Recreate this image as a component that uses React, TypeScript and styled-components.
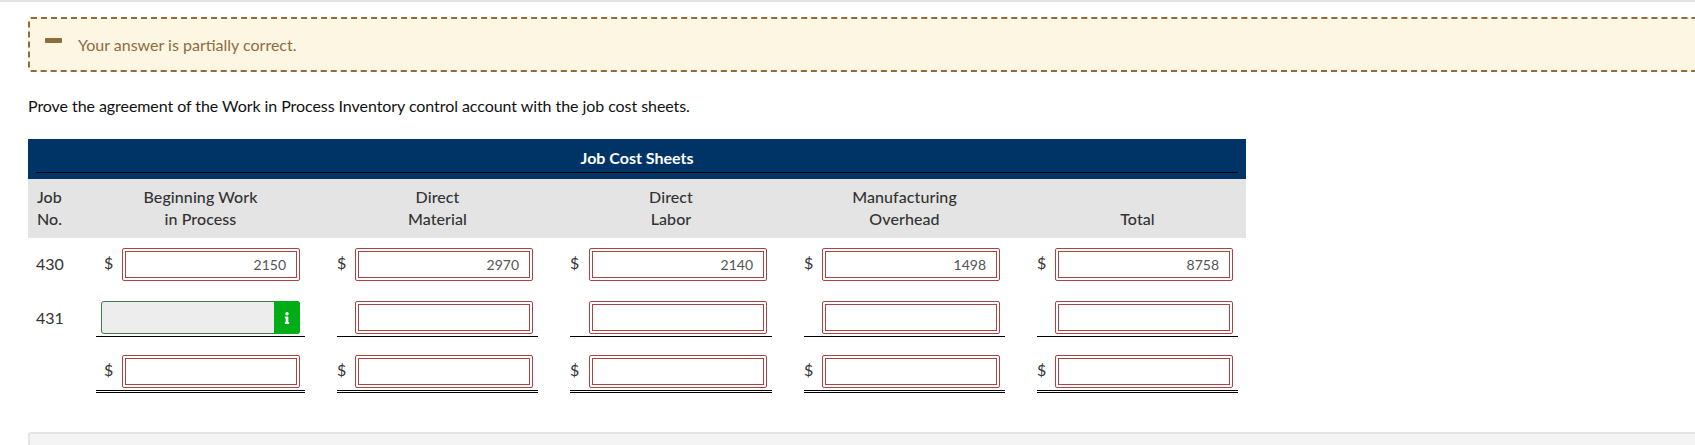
import { FaInfo } from "react-icons/fa";
import styled, { createGlobalStyle } from "styled-components";

const GlobalStyle = createGlobalStyle`
  html, body {
    margin: 0;
    height: 445px;
    overflow: hidden;
    background: #fff;
    font-family: Lato, "Open Sans", sans-serif;
  }
`;

const Frame = styled.div`
  height: 445px;
  overflow: hidden;
`;

const Page = styled.div`
  border-top: 2px solid #e3e3e3;
  padding: 15px 0 0 28px;
  width: 1800px;
  box-sizing: border-box;
`;

const Banner = styled.div`
  display: flex;
  align-items: center;
  height: 55px;
  box-sizing: border-box;
  border: 2px dashed #8c6d3f;
  border-radius: 3px;
  background: #fcf6e3;
  color: #8c6d3f;
  font-size: 16px;
  padding-left: 15px;
`;

const Dash = styled.span`
  width: 17px;
  height: 5px;
  border-radius: 1px;
  background: #8c6d3f;
  margin: 0 16px 8px 0;
`;

const Prompt = styled.p`
  margin: 22px 0 21px;
  color: #111;
  font-size: 16px;
  line-height: 24px;
  letter-spacing: -0.065px;
`;

const Sheet = styled.div`
  width: 1218px;
`;

const Title = styled.div`
  background: #003466;
  padding: 0 8px 6px;
  height: 40px;
  box-sizing: border-box;
`;

const TitleText = styled.div`
  height: 34px;
  line-height: 38px;
  box-sizing: border-box;
  border-bottom: 1px solid #000;
  color: #fff;
  font-size: 16px;
  font-weight: 700;
  text-align: center;
`;

const Row = styled.div`
  display: grid;
  grid-template-columns: 28px 209px 201px 202px 201px 201px;
  column-gap: 32px;
  padding: 0 8px;
`;

const HeadRow = styled(Row)`
  background: #e4e4e4;
  color: #333;
  font-size: 16px;
  font-weight: 500;
  letter-spacing: 0.08px;
  line-height: 22px;
  height: 59px;
  box-sizing: border-box;
  align-items: end;
  padding-bottom: 8px;
`;

const HeadCell = styled.div<{ $left?: boolean }>`
  text-align: ${(p) => (p.$left ? "left" : "center")};
  padding-left: ${(p) => (p.$left ? "1px" : "0")};
  white-space: nowrap;
`;

const BodyRow = styled(Row)`
  margin-top: 10px;
  height: 36px;
`;

const MiddleRow = styled(BodyRow)`
  margin-top: 17px;
`;

const TotalRow = styled(BodyRow)`
  margin-top: 18px;
  height: 38px;
`;

const JobNo = styled.div<{ $low?: boolean }>`
  color: #333;
  font-size: 16px;
  line-height: ${(p) => (p.$low ? "34px" : "32px")};
`;

const Cell = styled.div<{ $rule?: "single" | "double"; $first?: boolean }>`
  display: flex;
  justify-content: space-between;
  height: ${(p) => (p.$rule === "double" ? "38px" : "36px")};
  box-sizing: border-box;
  padding: 0 5px 0 ${(p) => (p.$first ? "8px" : "0")};
  border-bottom: ${(p) =>
    p.$rule === "double" ? "3px double #000" : p.$rule === "single" ? "1px solid #000" : "0 none"};
`;

const Dollar = styled.span`
  color: #333;
  font-size: 16px;
  line-height: 30px;
`;

const Field = styled.div`
  width: 178px;
  height: 33px;
  box-sizing: border-box;
  border: 1px solid #a94442;
  border-radius: 2px;
  padding: 2px;
  margin-left: auto;
`;

const FieldInner = styled.div`
  height: 100%;
  box-sizing: border-box;
  border: 1px solid #a94442;
  color: #555;
  font-size: 14px;
  line-height: 25px;
  text-align: right;
  padding-right: 10px;
`;

const LockedField = styled.div`
  display: flex;
  flex: none;
  justify-content: flex-end;
  width: 199px;
  height: 33px;
  box-sizing: border-box;
  margin-left: -3px;
  border: 1px solid #3f7a4a;
  border-radius: 3px;
  background: #ededed;
`;

const InfoTag = styled.div`
  display: flex;
  align-items: center;
  justify-content: center;
  width: 26px;
  margin: -1px -1px -1px 0;
  border-radius: 0 3px 3px 0;
  background: #00ad17;
  color: #fff;
  font-size: 12px;
`;

const Footer = styled.div`
  margin-top: 39px;
  height: 40px;
  border: 2px solid #e3e3e3;
  border-radius: 3px;
  background: #f4f4f4;
`;

type Column = { key: string; value: string };

const TOP_ROW: Column[] = [
  { key: "begin", value: "2150" },
  { key: "material", value: "2970" },
  { key: "labor", value: "2140" },
  { key: "overhead", value: "1498" },
  { key: "total", value: "8758" },
];

export default function App() {
  return (
    <Frame>
      <GlobalStyle />
      <Page>
        <Banner>
          <Dash />
          Your answer is partially correct.
        </Banner>
        <Prompt>Prove the agreement of the Work in Process Inventory control account with the job cost sheets.</Prompt>
        <Sheet>
          <Title>
            <TitleText>Job Cost Sheets</TitleText>
          </Title>
          <HeadRow>
            <HeadCell $left>
              Job
              <br />
              No.
            </HeadCell>
            <HeadCell>
              Beginning Work
              <br />
              in Process
            </HeadCell>
            <HeadCell>
              Direct
              <br />
              Material
            </HeadCell>
            <HeadCell>
              Direct
              <br />
              Labor
            </HeadCell>
            <HeadCell>
              Manufacturing
              <br />
              Overhead
            </HeadCell>
            <HeadCell>Total</HeadCell>
          </HeadRow>

          <BodyRow>
            <JobNo>430</JobNo>
            {TOP_ROW.map((c, i) => (
              <Cell key={c.key} $first={i === 0}>
                <Dollar>$</Dollar>
                <Field>
                  <FieldInner>{c.value}</FieldInner>
                </Field>
              </Cell>
            ))}
          </BodyRow>

          <MiddleRow>
            <JobNo $low>431</JobNo>
            {TOP_ROW.map((c, i) => (
              <Cell key={c.key} $rule="single" $first={i === 0}>
                {i === 0 ? (
                  <LockedField>
                    <InfoTag>
                      <FaInfo />
                    </InfoTag>
                  </LockedField>
                ) : (
                  <Field>
                    <FieldInner />
                  </Field>
                )}
              </Cell>
            ))}
          </MiddleRow>

          <TotalRow>
            <div />
            {TOP_ROW.map((c, i) => (
              <Cell key={c.key} $rule="double" $first={i === 0}>
                <Dollar>$</Dollar>
                <Field>
                  <FieldInner />
                </Field>
              </Cell>
            ))}
          </TotalRow>
        </Sheet>
        <Footer />
      </Page>
    </Frame>
  );
}
